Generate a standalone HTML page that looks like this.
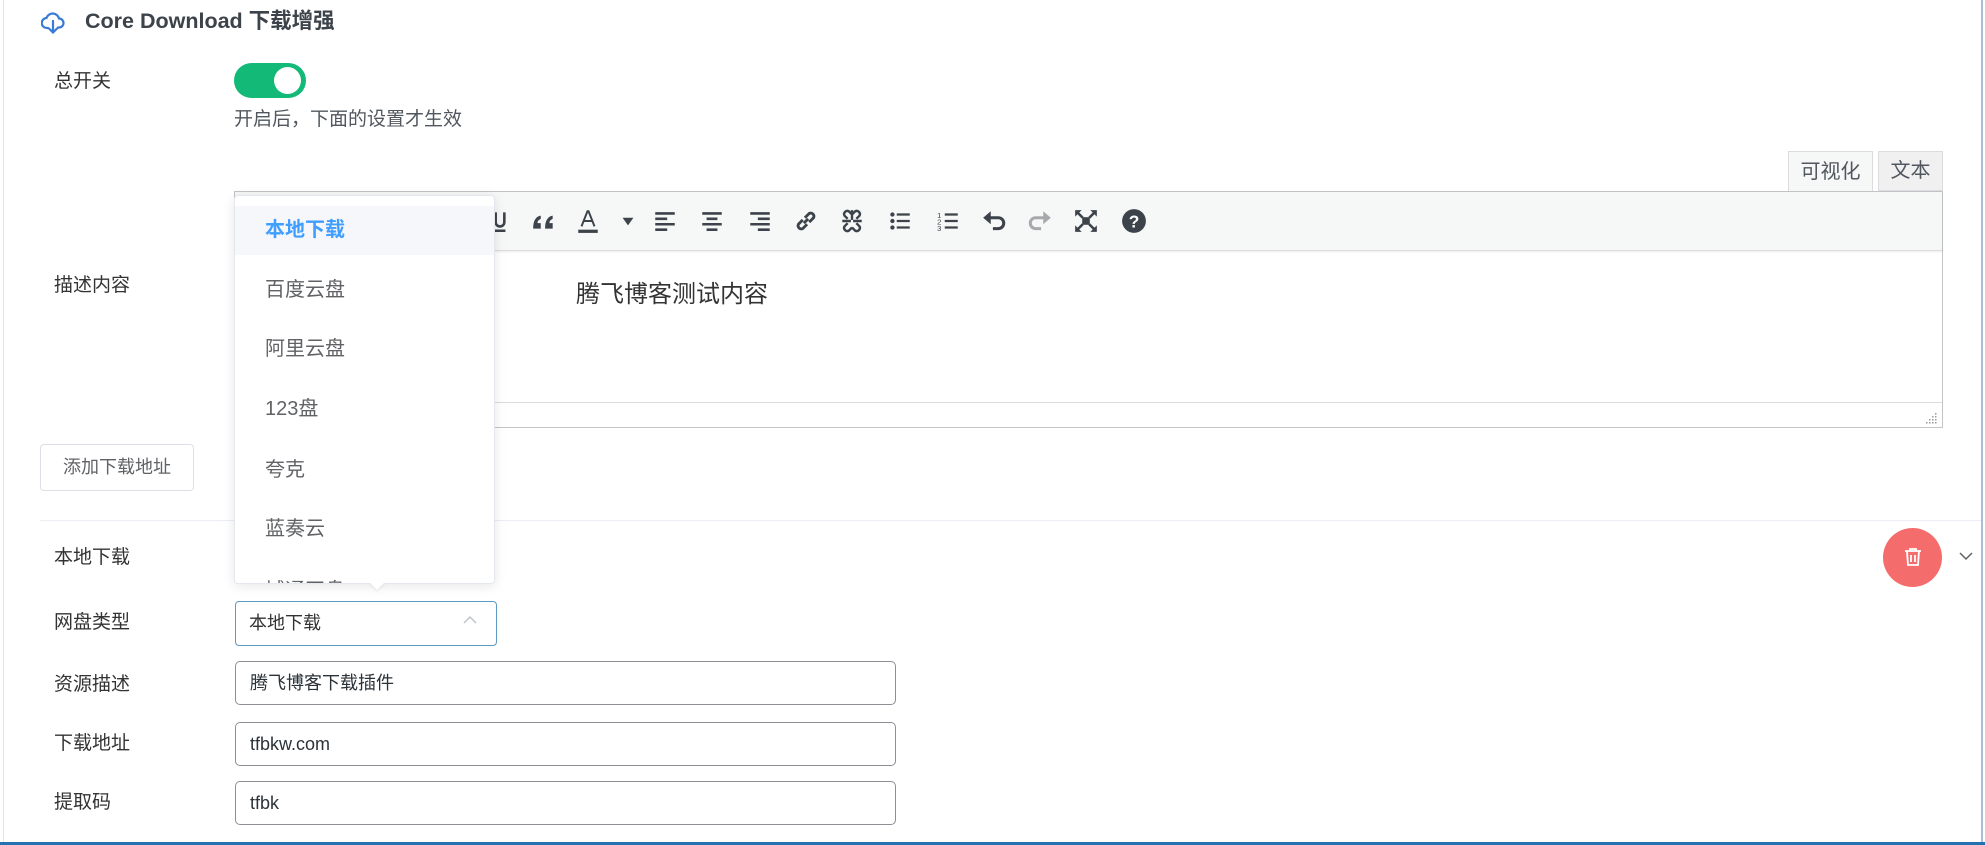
<!DOCTYPE html>
<html><head><meta charset="utf-8"><style>
*{box-sizing:border-box;margin:0;padding:0}
body{width:1985px;height:845px;background:#fff;position:relative;overflow:hidden;font-family:"Liberation Sans","Noto Sans CJK SC",sans-serif;color:#333;font-size:19px}
.a{position:absolute;white-space:nowrap}
.lbl{left:54px;line-height:24px;color:#333}
.inp{position:absolute;left:235px;width:661px;height:44px;border:1px solid #8c8f94;border-radius:5px;padding-left:14px;line-height:42px;font-size:18px;color:#2c3338}
.tb{position:absolute;top:208px;width:26px;height:26px}
.dd{position:absolute;left:265px;font-size:20px;color:#606266;line-height:24px}
</style></head><body>
<div class="a" style="left:3px;top:0;width:1px;height:845px;background:#e5e5e5"></div>
<div class="a" style="left:1981px;top:0;width:2px;height:845px;background:#a9bdd6"></div>
<div class="a" style="left:0;top:842px;width:1985px;height:3px;background:#2271b1"></div>

<svg class="a" style="left:41px;top:12px" width="24" height="22" viewBox="0 0 24 22"><path d="M7 16H6a5 5 0 0 1-.5-10A6.5 6.5 0 0 1 18 6.5a4.5 4.5 0 0 1 0 9h-1" fill="none" stroke="#3a7bd5" stroke-width="2.2" stroke-linecap="round"/><path d="M12 9v11M8 16.5l4 4 4-4" fill="none" stroke="#3a7bd5" stroke-width="2.2" stroke-linecap="round"/></svg>
<div class="a" style="left:85px;top:7px;font-size:21.5px;font-weight:bold;color:#3c434a;line-height:28px">Core Download 下载增强</div>

<div class="a lbl" style="top:70px">总开关</div>
<div class="a" style="left:234px;top:63px;width:72px;height:35px;border-radius:18px;background:#13b976"></div>
<div class="a" style="left:274px;top:67px;width:27px;height:27px;border-radius:50%;background:#fff"></div>
<div class="a" style="left:234px;top:108px;line-height:24px;color:#50575e">开启后，下面的设置才生效</div>

<div class="a lbl" style="top:274px">描述内容</div>
<div class="a" style="left:1788px;top:151px;width:85px;height:42px;background:#f6f7f7;border:1px solid #dcdcde;border-bottom:none;text-align:center;line-height:40px;color:#50575e;font-size:20px">可视化</div>
<div class="a" style="left:1878px;top:151px;width:65px;height:40px;background:#f0f0f1;border:1px solid #dcdcde;text-align:center;line-height:38px;color:#50575e;font-size:20px">文本</div>
<div class="a" style="left:234px;top:191px;width:1709px;height:237px;border:1px solid #c3c4c7;background:#fff"></div>
<div class="a" style="left:235px;top:192px;width:1707px;height:59px;background:#f6f7f7;border-bottom:1px solid #dcdcde;box-shadow:0 1px 2px rgba(0,0,0,.08)"></div>
<div class="a" style="left:235px;top:402px;width:1707px;height:1px;background:#dcdcde"></div>
<div class="a" style="left:576px;top:280px;font-size:24px;color:#333;line-height:30px">腾飞博客测试内容</div>
<svg class="a" style="left:1926px;top:412px" width="12" height="12"><g fill="#999"><rect x="9" y="1" width="1.5" height="1.5"/><rect x="6" y="4" width="1.5" height="1.5"/><rect x="9" y="4" width="1.5" height="1.5"/><rect x="3" y="7" width="1.5" height="1.5"/><rect x="6" y="7" width="1.5" height="1.5"/><rect x="9" y="7" width="1.5" height="1.5"/><rect x="0" y="10" width="1.5" height="1.5"/><rect x="3" y="10" width="1.5" height="1.5"/><rect x="6" y="10" width="1.5" height="1.5"/><rect x="9" y="10" width="1.5" height="1.5"/></g></svg>

<svg class="tb" style="left:487px" viewBox="0 0 24 24"><path d="M8 4v9a4 4 0 0 0 8 0V4M7 21h10" fill="none" stroke="#3c434a" stroke-width="2.4"/></svg>
<svg class="tb" style="left:531px" viewBox="0 0 24 24"><path d="M2 19c0-7 2-11 7-12v3c-2 1-3 2-3 4h3v5zM13 19c0-7 2-11 7-12v3c-2 1-3 2-3 4h3v5z" fill="#3c434a"/></svg>
<svg class="tb" style="left:575px" viewBox="0 0 24 24"><path d="M6 17L11.5 3h1L18 17M8 12h8" fill="none" stroke="#3c434a" stroke-width="1.8"/><rect x="3" y="20" width="18" height="3" fill="#3c434a"/></svg>
<svg class="tb" style="left:615px" viewBox="0 0 24 24"><path d="M7 9h10l-5 7z" fill="#3c434a"/></svg>
<svg class="tb" style="left:652px" viewBox="0 0 24 24"><path d="M3 5h18M3 10h11M3 15h18M3 20h11" stroke="#3c434a" stroke-width="2.4"/></svg>
<svg class="tb" style="left:699px" viewBox="0 0 24 24"><path d="M3 5h18M7 10h10M3 15h18M7 20h10" stroke="#3c434a" stroke-width="2.4"/></svg>
<svg class="tb" style="left:747px" viewBox="0 0 24 24"><path d="M3 5h18M10 10h11M3 15h18M10 20h11" stroke="#3c434a" stroke-width="2.4"/></svg>
<svg class="tb" style="left:793px" viewBox="0 0 24 24"><path d="M10 14l4-4M9 11l-4 4a3 3 0 0 0 4 4l4-4M15 13l4-4a3 3 0 0 0-4-4l-4 4" fill="none" stroke="#3c434a" stroke-width="2.6"/></svg>
<svg class="tb" style="left:839px" viewBox="0 0 24 24"><path d="M8 10L5 7a3 3 0 0 1 4-4l3 3M16 14l3 3a3 3 0 0 1-4 4l-3-3M16 10l3-3a3 3 0 0 0-4-4l-3 3M8 14l-3 3a3 3 0 0 0 4 4l3-3M11 12h-8M13 12h8M12 11v-9" fill="none" stroke="#3c434a" stroke-width="2.2"/></svg>
<svg class="tb" style="left:887px" viewBox="0 0 24 24"><g fill="#3c434a"><circle cx="5" cy="6" r="2"/><circle cx="5" cy="12" r="2"/><circle cx="5" cy="18" r="2"/></g><path d="M9 6h12M9 12h12M9 18h12" stroke="#3c434a" stroke-width="2"/></svg>
<svg class="tb" style="left:935px" viewBox="0 0 24 24"><text x="2" y="9" font-size="7" fill="#3c434a" font-family="Liberation Sans">1</text><text x="2" y="15" font-size="7" fill="#3c434a" font-family="Liberation Sans">2</text><text x="2" y="21" font-size="7" fill="#3c434a" font-family="Liberation Sans">3</text><path d="M9 6h12M9 12h12M9 18h12" stroke="#3c434a" stroke-width="2"/></svg>
<svg class="tb" style="left:981px" viewBox="0 0 24 24"><path d="M7 9h9a5 5 0 0 1 0 10h-5" fill="none" stroke="#3c434a" stroke-width="2.8"/><path d="M2 9l7-6v12z" fill="#3c434a"/></svg>
<svg class="tb" style="left:1027px" viewBox="0 0 24 24"><path d="M17 9H8a5 5 0 0 0 0 10h5" fill="none" stroke="#a7aaad" stroke-width="2.8"/><path d="M22 9l-7-6v12z" fill="#a7aaad"/></svg>
<svg class="tb" style="left:1073px" viewBox="0 0 24 24"><path d="M3 3l6 6M21 3l-6 6M3 21l6-6M21 21l-6-6" stroke="#3c434a" stroke-width="2.4"/><rect x="8.5" y="8.5" width="7" height="7" fill="#3c434a"/><path d="M2 2h6l-6 6zM22 2h-6l6 6zM2 22h6l-6-6zM22 22h-6l6-6z" fill="#3c434a"/></svg>
<svg class="tb" style="left:1121px" viewBox="0 0 24 24"><circle cx="12" cy="12" r="11" fill="#3c434a"/><text x="12" y="18" text-anchor="middle" font-size="16" font-weight="bold" fill="#fff" font-family="Liberation Sans">?</text></svg>

<div class="a" style="left:40px;top:444px;width:154px;height:47px;border:1px solid #dcdfe6;border-radius:4px;text-align:center;line-height:45px;font-size:18px;color:#606266">添加下载地址</div>
<div class="a" style="left:40px;top:520px;width:1941px;height:1px;background:#ebeef5"></div>

<div class="a lbl" style="top:546px">本地下载</div>
<div class="a" style="left:1883px;top:528px;width:59px;height:59px;border-radius:50%;background:#f56c6c"></div>
<svg class="a" style="left:1902px;top:546px" width="22" height="22" viewBox="0 0 22 22"><path d="M3 5h16M8 5V3h6v2M5 5l1 14h10l1-14M9 9v7M13 9v7" fill="none" stroke="#fff" stroke-width="1.8"/></svg>
<svg class="a" style="left:1958px;top:551px" width="16" height="10" viewBox="0 0 16 10"><path d="M2 2l6 6 6-6" fill="none" stroke="#606266" stroke-width="1.5"/></svg>

<div class="a lbl" style="top:611px">网盘类型</div>
<div class="a" style="left:235px;top:601px;width:262px;height:45px;border:1px solid #5e9ac4;border-radius:4px;padding-left:13px;line-height:43px;font-size:18px;color:#333">本地下载</div>
<svg class="a" style="left:462px;top:615px" width="16" height="10" viewBox="0 0 16 10"><path d="M2 8l6-6 6 6" fill="none" stroke="#c0c4cc" stroke-width="1.5"/></svg>

<div class="a lbl" style="top:673px">资源描述</div>
<div class="inp" style="top:661px">腾飞博客下载插件</div>
<div class="a lbl" style="top:732px">下载地址</div>
<div class="inp" style="top:722px">tfbkw.com</div>
<div class="a lbl" style="top:791px">提取码</div>
<div class="inp" style="top:781px">tfbk</div>

<div class="a" style="left:234px;top:195px;width:261px;height:389px;background:#fff;border:1px solid #e4e7ed;border-radius:4px;box-shadow:0 2px 12px rgba(0,0,0,.1);overflow:hidden">
<div style="position:absolute;left:0;top:10px;width:100%;height:49px;background:#f5f7fa"></div>
</div>
<div class="a" style="left:369px;top:582px;width:0;height:0;border-left:8px solid transparent;border-right:8px solid transparent;border-top:8px solid #fff;filter:drop-shadow(0 2px 1px rgba(0,0,0,.06))"></div>
<div class="dd a" style="top:218px;color:#409eff;font-weight:bold">本地下载</div>
<div class="dd a" style="top:278px">百度云盘</div>
<div class="dd a" style="top:337px">阿里云盘</div>
<div class="dd a" style="top:397px">123盘</div>
<div class="dd a" style="top:458px">夸克</div>
<div class="dd a" style="top:517px">蓝奏云</div>
<div class="a" style="left:234px;top:579px;width:261px;height:4px;overflow:hidden"><div class="dd a" style="left:31px;top:0px">城通网盘</div></div>
</body></html>
